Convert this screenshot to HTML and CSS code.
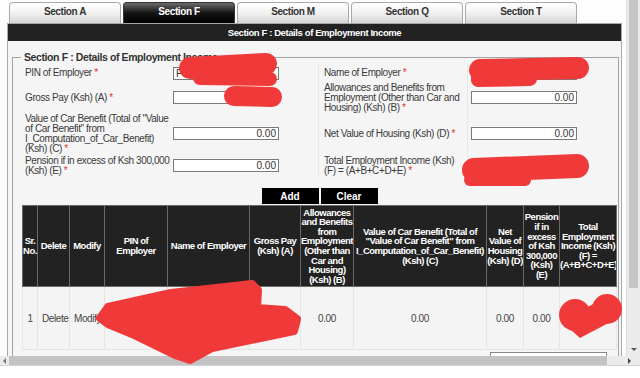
FILE: index.html
```html
<!DOCTYPE html>
<html>
  <head>
    <title>Section F : Details of Employment Income</title>
    <link rel="stylesheet" href="styles.css">
  </head>
  <body>
    <div class="frame">
      <div class="page">
        <!-- Section tabs -->
        <ul class="tabs">
          <li class="tab">Section A</li>
          <li class="tab active">Section F</li>
          <li class="tab">Section M</li>
          <li class="tab">Section Q</li>
          <li class="tab">Section T</li>
        </ul>

        <div class="panel">
          <div class="panel-title">Section F : Details of Employment Income</div>

          <fieldset class="details">
            <legend>Section F : Details of Employment Income</legend>

            <!-- Entry form -->
            <div class="form-grid">
              <div class="lbl"><span>PIN of Employer <span class="req">*</span></span></div>
              <div class="fld"><input type="text" class="left" value="P"></div>
              <div class="lbl mid"><span>Name of Employer <span class="req">*</span></span></div>
              <div class="fld"><input type="text" class="left" value=""></div>

              <div class="lbl"><span>Gross Pay (Ksh) (A) <span class="req">*</span></span></div>
              <div class="fld"><input type="text" value=""></div>
              <div class="lbl mid"><span>Allowances and Benefits from Employment (Other than Car and Housing) (Ksh) (B) <span class="req">*</span></span></div>
              <div class="fld"><input type="text" value="0.00"></div>

              <div class="lbl"><span>Value of Car Benefit (Total of "Value of Car Benefit" from I_Computation_of_Car_Benefit) (Ksh) (C) <span class="req">*</span></span></div>
              <div class="fld"><input type="text" value="0.00"></div>
              <div class="lbl mid"><span>Net Value of Housing (Ksh) (D) <span class="req">*</span></span></div>
              <div class="fld"><input type="text" value="0.00"></div>

              <div class="lbl"><span>Pension if in excess of Ksh 300,000 (Ksh) (E) <span class="req">*</span></span></div>
              <div class="fld"><input type="text" value="0.00"></div>
              <div class="lbl mid"><span>Total Employment Income (Ksh) (F) = (A+B+C+D+E) <span class="req">*</span></span></div>
              <div class="fld"><input type="text" value="0.00"></div>
            </div>

            <div class="actions">
              <button class="btn">Add</button>
              <button class="btn">Clear</button>
            </div>

            <!-- Employers list -->
            <table class="grid">
              <colgroup>
                <col class="c-sr"><col class="c-del"><col class="c-mod"><col class="c-pin"><col class="c-name">
                <col class="c-gross"><col class="c-allow"><col class="c-car"><col class="c-house"><col class="c-pension"><col class="c-total">
              </colgroup>
              <thead>
                <tr>
                  <th>Sr. No.</th>
                  <th>Delete</th>
                  <th>Modify</th>
                  <th>PIN of Employer</th>
                  <th>Name of Employer</th>
                  <th>Gross Pay (Ksh) (A)</th>
                  <th>Allowances and Benefits from Employment (Other than Car and Housing) (Ksh) (B)</th>
                  <th>Value of Car Benefit (Total of "Value of Car Benefit" from I_Computation_of_Car_Benefit) (Ksh) (C)</th>
                  <th>Net Value of Housing (Ksh) (D)</th>
                  <th>Pension if in excess of Ksh 300,000 (Ksh) (E)</th>
                  <th>Total Employment Income (Ksh) (F) = (A+B+C+D+E)</th>
                </tr>
              </thead>
              <tbody>
                <tr>
                  <td>1</td>
                  <td class="link">Delete</td>
                  <td class="link">Modify</td>
                  <td></td>
                  <td></td>
                  <td>0.00</td>
                  <td>0.00</td>
                  <td>0.00</td>
                  <td>0.00</td>
                  <td>0.00</td>
                  <td>0.00</td>
                </tr>
              </tbody>
            </table>
            <div class="next-box"></div>
          </fieldset>
        </div>
      </div>

      <div class="vscroll">
        <div class="vthumb"></div>
        <span class="arrow-down"></span>
      </div>
      <div class="hscroll">
        <span class="arrow-left"></span>
        <div class="hthumb"></div>
      </div>
      <div class="corner"><span class="arrow-right"></span></div>
    </div>

    <!-- redaction marks drawn over the screenshot -->
    <svg class="scribbles" width="640" height="378" viewBox="0 0 640 378">
      <g fill="none" stroke="#f03a3a" stroke-linecap="round" stroke-linejoin="round">
        <path d="M190 68 L266 64" stroke-width="22"/>
        <path d="M200 78 L270 79" stroke-width="14"/>
        <path d="M234 96 L272 97" stroke-width="20"/>
        <path d="M480 70 L578 68" stroke-width="22"/>
        <path d="M478 80 L530 79" stroke-width="14"/>
        <path d="M474 170 L577 166" stroke-width="24"/>
        <path d="M470 180 L525 180" stroke-width="12"/>
      </g>
      <path fill="#f03a3a" stroke="#f03a3a" stroke-width="8" stroke-linejoin="round"
            d="M100 318 L108 307 L171 293 L252 284 L258 290 L257 308 L285 310 L297 319 L294 331 L212 348 L190 360 L175 355 L132 334 L108 324 Z"/>
      <g fill="#f03a3a">
        <circle cx="575" cy="315" r="16"/>
        <circle cx="607" cy="309" r="15"/>
        <path d="M562 322 L580 338 L618 318 L600 300 Z"/>
      </g>
    </svg>
  </body>
</html>
```

FILE: styles.css
```css
body {
  margin: 0;
  font-family: "Liberation Sans", Arial, sans-serif;
  font-size: 10px;
  letter-spacing: -0.4px;
  color: #333;
  background-color: #ffffff;
}
.frame {
  display: grid;
  grid-template-columns: 626px 14px;
  grid-template-rows: 356px 9px;
  border-bottom: 1px solid #d4d4d4;
}
.page {
  overflow: hidden;
  padding: 2px 0 0 7px;
  background-color: #fdfdfd;
}
.tabs {
  list-style: none;
  margin: 0 0 0 2px;
  padding: 0;
  display: flex;
  gap: 2px;
}
.tab {
  width: 110px;
  height: 20px;
  border: 1px solid #a9a9a9;
  border-bottom: none;
  border-radius: 4px 4px 0 0;
  background: linear-gradient(#ffffff, #f1f1f1 50%, #d4d4d4);
  text-align: center;
  line-height: 18px;
  font-size: 10px;
  font-weight: bold;
  color: #333;
}
.tab.active {
  background: linear-gradient(#6a6a6a, #141414 50%, #000000);
  border-color: #333;
  color: #ffffff;
}
.panel {
  width: 613px;
  border: 1px solid #a8a8a8;
  background-color: #f5f5f5;
}
.panel-title {
  height: 17px;
  line-height: 17px;
  background-color: #222;
  color: #ffffff;
  font-weight: bold;
  font-size: 9.5px;
  text-align: center;
}
.details {
  margin: 10px 0 0 4px;
  padding: 0 0 20px 0;
  width: 605px;
  border: 1px solid #a3a3a3;
}
.details legend {
  margin-left: 8px;
  padding: 0 3px;
  font-size: 10.5px;
  font-weight: bold;
  line-height: 12px;
  color: #333;
}
.form-grid {
  display: grid;
  grid-template-columns: 150px 148px 150px 144px;
  grid-template-rows: 18px 31px 41px 23px;
  margin: 1px 0 0 7px;
}
.lbl {
  display: flex;
  align-items: center;
  padding-left: 5px;
  line-height: 10px;
  color: #3a3a3a;
}
.lbl.mid {
  border-left: 1px solid #e8e8e8;
  border-right: 1px solid #e8e8e8;
}
.req {
  color: #e03030;
}
.fld {
  display: flex;
  align-items: center;
  padding-left: 3px;
}
.fld input {
  box-sizing: border-box;
  width: 106px;
  height: 13px;
  border: 1px solid #7a7a7a;
  padding: 0 2px;
  background-color: #ffffff;
  font-family: "Liberation Sans", Arial, sans-serif;
  font-size: 10px;
  color: #333;
  text-align: right;
}
.fld input.left {
  text-align: left;
}
.actions {
  display: flex;
  justify-content: center;
  gap: 2px;
  margin: 11px 0 1px 8px;
}
.btn {
  width: 57px;
  height: 16px;
  padding: 0;
  border: none;
  background-color: #000;
  color: #ffffff;
  font-family: "Liberation Sans", Arial, sans-serif;
  font-size: 10px;
  font-weight: bold;
}
.grid {
  margin-left: 9px;
  width: 594px;
  table-layout: fixed;
  border-collapse: collapse;
}
.c-sr { width: 15px; }
.c-del { width: 32px; }
.c-mod { width: 35px; }
.c-pin { width: 63px; }
.c-name { width: 82px; }
.c-gross { width: 51px; }
.c-allow { width: 53px; }
.c-car { width: 133px; }
.c-house { width: 37px; }
.c-pension { width: 36px; }
.c-total { width: 57px; }
.grid th {
  height: 80px;
  padding: 0;
  background-color: #222;
  border: 1px solid #6a6a6a;
  color: #ffffff;
  font-size: 9.5px;
  font-weight: bold;
  letter-spacing: -0.5px;
  line-height: 9.6px;
  text-align: center;
  overflow: hidden;
}
.grid td {
  height: 62px;
  padding: 0;
  background-color: #f4f4f4;
  border: 1px solid #e4e4e4;
  color: #444;
  text-align: center;
  white-space: nowrap;
  overflow: hidden;
}
.grid td.link {
  text-align: left;
  padding-left: 4px;
}
.next-box {
  margin: 2px 0 0 477px;
  width: 115px;
  height: 12px;
  border: 1px solid #8a8a8a;
  background-color: #ffffff;
}
.vscroll {
  display: flex;
  flex-direction: column;
  justify-content: space-between;
  align-items: center;
  background-color: #ebebeb;
  border-left: 1px solid #dcdcdc;
}
.vthumb {
  width: 9px;
  height: 288px;
  background-color: #c6c6c6;
}
.arrow-down {
  margin-bottom: 5px;
  border-left: 3px solid transparent;
  border-right: 3px solid transparent;
  border-top: 3px solid #555;
}
.hscroll {
  display: flex;
  align-items: center;
  gap: 3px;
  padding-left: 3px;
  background-color: #ebebeb;
}
.arrow-left {
  border-top: 3px solid transparent;
  border-bottom: 3px solid transparent;
  border-right: 3px solid #777;
}
.hthumb {
  width: 598px;
  height: 9px;
  background-color: #c3c3c3;
}
.corner {
  display: flex;
  align-items: center;
  padding-left: 2px;
  background-color: #ebebeb;
}
.arrow-right {
  border-top: 3px solid transparent;
  border-bottom: 3px solid transparent;
  border-left: 3px solid #444;
}
.scribbles {
  position: absolute;
  top: 0;
  left: 0;
  pointer-events: none;
}
```
